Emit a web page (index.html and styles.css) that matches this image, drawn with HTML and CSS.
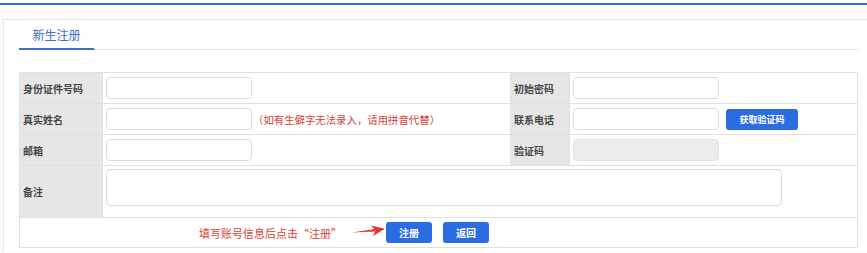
FILE: index.html
```html
<!DOCTYPE html>
<html lang="zh-CN">
<head>
<meta charset="utf-8">
<title>新生注册</title>
<link rel="stylesheet" href="styles.css">
</head>
<body>
<div class="topline"></div>
<div class="page">
  <div class="card">
    <div class="tabs"><div class="tab">新生注册</div></div>
    <div class="form">
      <div class="lab">身份证件号码</div>
      <div class="fld"><input class="inp" type="text"></div>
      <div class="lab">初始密码</div>
      <div class="fld"><input class="inp" type="text"></div>

      <div class="lab">真实姓名</div>
      <div class="fld"><input class="inp" type="text"><span class="hint">（如有生僻字无法录入，请用拼音代替）</span></div>
      <div class="lab">联系电话</div>
      <div class="fld"><input class="inp" type="text"><button class="btn btn-code" type="button">获取验证码</button></div>

      <div class="lab">邮箱</div>
      <div class="fld"><input class="inp" type="text"></div>
      <div class="lab">验证码</div>
      <div class="fld"><input class="inp inp-dis" type="text" disabled></div>

      <div class="lab lab-tall">备注</div>
      <div class="fld fld-wide"><textarea class="area"></textarea></div>

      <div class="actions">
        <span class="tip">填写账号信息后点击“注册”</span>
        <svg class="arrow" width="36" height="14" viewBox="0 0 36 14">
          <polygon points="2,8.6 25,5 25,7.4" fill="#e2362c"/>
          <polygon points="21,1.6 35,4.8 23,12 25.5,6.6" fill="#e2362c"/>
        </svg>
        <button class="btn btn-main" type="button">注册</button>
        <button class="btn btn-main" type="button">返回</button>
      </div>
    </div>
  </div>
</div>
</body>
</html>
```
FILE: styles.css
```css
html, body {
  margin: 0;
  padding: 0;
}
body {
  background: #fcfbfa;
  overflow: hidden;
  font-family: "Noto Sans CJK SC", "Noto Sans", sans-serif;
  color: #444;
}
.topline {
  margin-top: 3px;
  height: 2px;
  background: #3a6ed3;
}
.page {
  padding-top: 14px;
}
.card {
  margin-left: 3px;
  margin-right: -20px;
  height: 232px;
  background: #fff;
  border: 1px solid #e6e6e6;
  border-bottom: none;
  padding: 0 15px;
}
.tabs {
  width: 839px;
  display: flex;
  border-bottom: 1px solid #e6e6e6;
}
.tab {
  width: 75px;
  height: 28px;
  line-height: 29px;
  text-align: center;
  font-size: 12px;
  color: #3a6cc8;
  border-bottom: 2px solid #3a6ed3;
  margin-bottom: -1px;
}
.form {
  margin-top: 22px;
  display: grid;
  width: fit-content;
  grid-template-columns: 82px 407px 58px 287px;
  grid-template-rows: 30px 30px 30px 51px 29px;
  gap: 1px;
  padding: 1px;
  background: #e0e0e0;
}
.lab {
  background: #e6e6e6;
  font-size: 10px;
  font-weight: bold;
  color: #444;
  display: flex;
  align-items: center;
  padding-left: 3px;
}
.fld {
  background: #fff;
  display: flex;
  align-items: center;
  padding-left: 3px;
}
.fld-wide {
  grid-column: span 3;
  align-items: flex-start;
  padding-top: 3px;
}
.inp {
  box-sizing: border-box;
  width: 146px;
  height: 22px;
  margin: 0;
  border: 1px solid #dcdcdc;
  border-radius: 4px;
  background: #fff;
  outline: none;
}
.inp-dis {
  background: #ececec;
  border-color: #e2e2e2;
}
.hint {
  font-size: 10.4px;
  color: #d8403a;
  margin-left: 1px;
}
.area {
  box-sizing: border-box;
  width: 676px;
  height: 37px;
  margin: 0;
  border: 1px solid #dcdcdc;
  border-radius: 4px;
  resize: none;
  outline: none;
}
.btn {
  box-sizing: border-box;
  border: none;
  margin: 0;
  padding: 0;
  background: #2b6de0;
  color: #fff;
  font-family: "Noto Sans CJK SC", "Noto Sans", sans-serif;
  font-weight: bold;
  border-radius: 3px;
  height: 21px;
}
.btn-code {
  width: 72px;
  margin-left: 7px;
  font-size: 9px;
}
.btn-main {
  width: 46px;
  font-size: 10px;
}
.btn-main + .btn-main {
  margin-left: 11px;
}
.actions {
  grid-column: 1 / -1;
  background: #fff;
  display: flex;
  align-items: center;
  padding-left: 179px;
}
.tip {
  font-size: 11px;
  color: #d8403a;
  width: 151px;
}
.arrow {
  display: block;
  margin-top: -4px;
}
```
